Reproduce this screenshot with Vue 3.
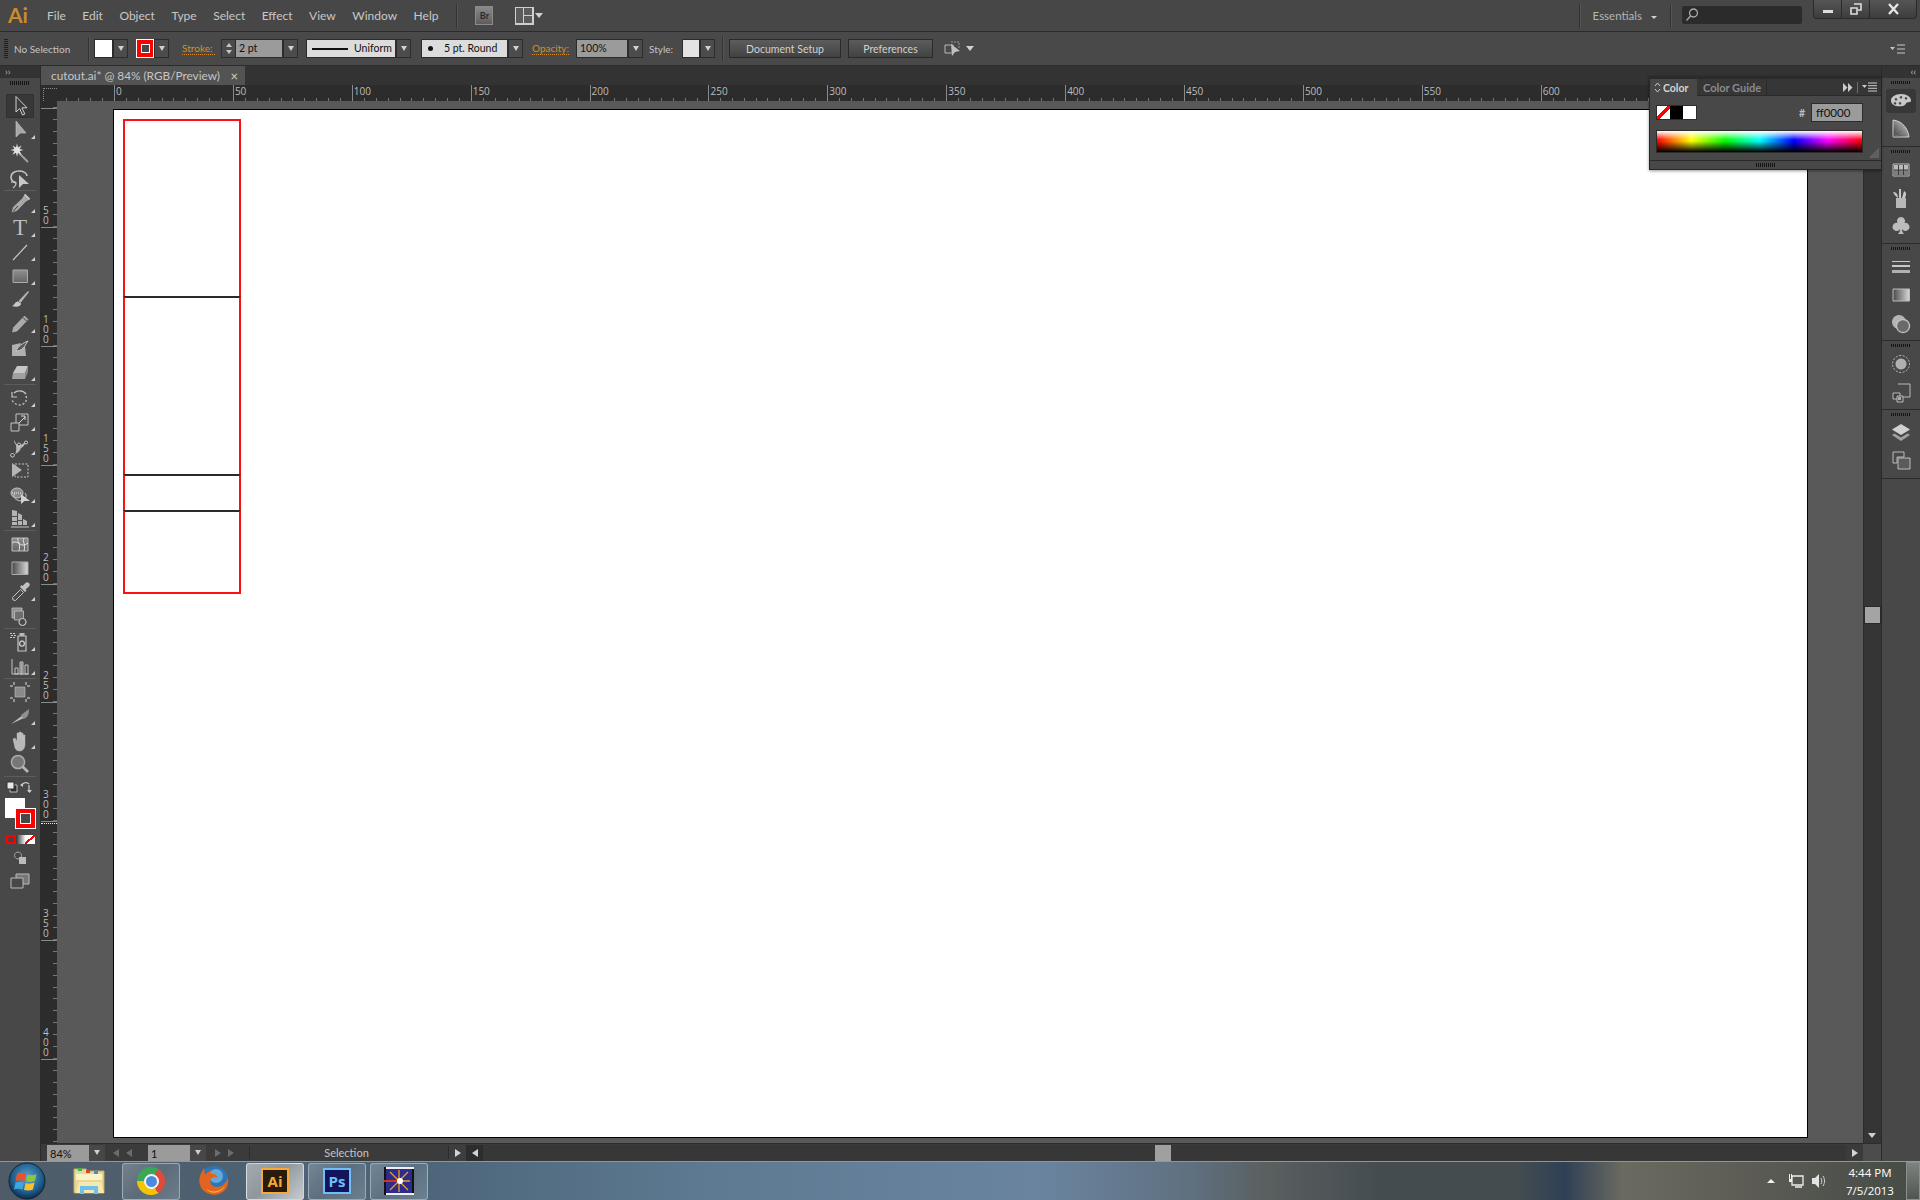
<script setup>
const menus = ['File', 'Edit', 'Object', 'Type', 'Select', 'Effect', 'View', 'Window', 'Help']

const L = '#b4b4b4'
const S = '#c4c4c4'
const D = '#3c3c3c'

// each path: [d, fill, stroke, strokeWidth, dash]
const toolGroups = [
  [
    { id: 'selection', active: true, paths: [['M8 2.500V18l3.600-3.400 3 6.400 2.200-1-2.900-6.200H19Z', D, '#d0d0d0', 1]] },
    { id: 'direct', more: true, paths: [['M8 3v16l4.200-4H18Z', '#a8a8a8', '#c8c8c8', 0.6]] },
    { id: 'wand', paths: [['M11 11l9 9', 'none', '#a0a0a0', 2], ['M9 1.500l1 4 3.600-2-2 3.600 4 1-4 1 2 3.600-3.600-2-1 4-1-4-3.600 2 2-3.600-4-1 4-1-2-3.600 3.600 2Z', '#e2e2e2']] },
    { id: 'lasso', paths: [['M8 17c-4-1-5-3-5-6 0-4 4-6 8-6s8 2 8 5', 'none', S, 1.6], ['M3.500 17c0-2 4-2 4.500 0s-2 4-3 5', 'none', S, 1.2], ['M11 9v13l4-4h6Z', '#c8c8c8']] }
  ],
  [
    { id: 'pen', more: true, paths: [['M16 4l4 4-2.500 1.500L9 18.500 4 20l1.500-5L14.500 6.500Z', '#a8a8a8', '#c4c4c4', 0.5], ['M5 19.500l5-5.500', 'none', D, 1], ['M16.500 2.500l5 5', 'none', '#c8c8c8', 2]] },
    { id: 'type', more: true, glyph: 'T' },
    { id: 'line', more: true, paths: [['M5 20L19 5', 'none', S, 1.2]] },
    { id: 'rect', more: true, paths: [['M5 6h14.500v12.500H5Z', 'url(#iconGrad)', '#aaa', 1]] },
    { id: 'brush', paths: [['M20 3L10.500 13l2 2L21 4Z', '#b4b4b4'], ['M10 13.500c-3 0-3 3-6 4.500 3 1.500 9 1 9-2.500Z', '#c8c8c8']] },
    { id: 'pencil', more: true, paths: [['M16.500 4l3.500 3.500L9 19l-4.500 1 1-4.500Z', '#aaa', '#c4c4c4', 0.5], ['M15 5.500l3.500 3.500', 'none', D, 1]] },
    { id: 'blob', paths: [['M4 9l9-2-2 5 6-2 1 10H4Z', '#b0b0b0'], ['M8 15c2-5 7-8 12-10l-2 3c-2 4-5 7-10 7Z', '#5a5a5a', '#c8c8c8', 1]] },
    { id: 'eraser', more: true, paths: [['M9 6h11l-3 7H5Z', '#c6c6c6'], ['M5 13h12v6H4Z', '#a0a0a0'], ['M17 13l3-7v6l-3 7Z', '#8a8a8a']] }
  ],
  [
    { id: 'rotate', more: true, paths: [['M6 7c3-3 9-3 12 1', 'none', S, 1.3], ['M4 6v5h5', 'none', S, 1.2], ['M18 10c2 5-2 9-6 9s-8-3-8-6', 'none', S, 1.3, '2 2']] },
    { id: 'scale', more: true, paths: [['M8 4h12v11H8Z', 'none', S, 1], ['M3 13h8v8H3Z', '#484848', S, 1], ['M11 13l6-6M13 6h4v4', 'none', '#ddd', 1]] },
    { id: 'warp', more: true, paths: [['M6 6c2 3 2 5 6 5 3 0 3-3 7-3-3 2-3 5-6 6-1 3-3 5-6 6 2-3 1-7 1-9-1-1-2-3-2-5Z', '#b8b8b8'], ['M4.500 19.500a1.800 1.800 0 1 0 .01 0M11 9a1.500 1.500 0 1 0 .01 0M18 7a1.500 1.500 0 1 0 .01 0', D, '#e2e2e2', 1]] },
    { id: 'free', paths: [['M7 6h13v13H7Z', 'none', S, 1, '2 1.500'], ['M4 5l10 7-10 7Z', '#b4b4b4']] },
    { id: 'shape', more: true, paths: [['M3 11a6 5 0 1 0 12 0a6 5 0 1 0-12 0', '#8a8a8a', S, 1], ['M7 11a6 5 0 1 0 10 0', 'none', S, 1], ['M4 11h10', 'none', '#eee', 1, '1 1'], ['M13 12v10l3.500-3H22Z', '#d0d0d0']] },
    { id: 'persp', more: true, paths: [['M4 4l5 1v5H4ZM4 11h5v4H4ZM4 16h5v3H4ZM10 7l4 2v5h-4ZM10 15h4v4h-4ZM15 13l4 2v4h-4Z', '#b4b4b4'], ['M3 21h18', 'none', S, 1]] }
  ],
  [
    { id: 'mesh', paths: [['M4 6h16v13H4Z', 'url(#iconGrad)', '#bbb', 1], ['M4 11c3-2 5-1 8 1s5 1 8-1M10 6c-1 4 3 5 1 13M16 6c-2 4 2 6 0 13', 'none', '#e4e4e4', 1]] },
    { id: 'gradient', paths: [['M4 6h16v12.500H4Z', 'url(#iconGradH)', '#aaa', 1]] },
    { id: 'dropper', more: true, paths: [['M5 20l-.5-2.500 8-8 3 3-8 8Z', '#4a4a4a', S, 1], ['M12 7l5 5 1.500-1.500-1-1L21 6.500a2.200 2.200 0 0 0-3.500-3.500L14.500 6l-1-1Z', '#c0c0c0']] },
    { id: 'blend', paths: [['M4 4h10v10H4Z', '#8c8c8c', S, 0.8], ['M6.500 7h9v9h-9Z', '#6e6e6e', S, 0.8], ['M14.500 14.500a3.500 3.500 0 1 0 .01 0', '#484848', S, 1.2]] }
  ],
  [
    { id: 'symbol', more: true, paths: [['M10 6h8v15h-8Z', '#4a4a4a', S, 1.2], ['M11.500 3h5v3h-5Z', '#b8b8b8'], ['M14 11a2.500 2.500 0 1 0 .01 0', 'none', S, 1.5], ['M2 3h2v1H2ZM5 3h2v1H5ZM3 5h2v1H3ZM6 5h2v1H6ZM2 7h2v1H2ZM5 7h2v1H5Z', '#c8c8c8']] },
    { id: 'graph', more: true, paths: [['M4 5v15h17', 'none', S, 1], ['M7 14h3v6H7ZM12 8h3v12h-3ZM17 11h3v9h-3Z', 'none', S, 1], ['M12.500 8.500h2V20h-2Z', '#aaa']] }
  ],
  [
    { id: 'artboard', paths: [['M7 7h10v10H7Z', '#8a8a8a', S, 0.6], ['M2 6h3M19 6h3M2 18h3M19 18h3M6 2v3M18 2v3M6 19v3M18 19v3', 'none', '#ddd', 1]] },
    { id: 'slice', more: true, paths: [['M3 20l12-9 1 3Z', '#bbb'], ['M13 11l8-6c0 5-1 9-6 10Z', '#909090']] },
    { id: 'hand', more: true, paths: [['M5 11l2-1 2 3V5h2v6-7h2v7-6h2v7-5h2v9c0 4-2 7-5 7s-4-1-5-3Z', '#b8b8b8', '#c8c8c8', 0.4]] },
    { id: 'zoom', paths: [['M10 3.500a6.500 6.500 0 1 0 .01 0', '#777', '#aaa', 1.5], ['M14.500 14.500L20 20', 'none', '#b4b4b4', 2.6]] }
  ]
]

const dockGroups = [
  [
    { id: 'color', active: true, paths: [['M12 5c6 0 10 3 10 6.500 0 2-2.500 1.500-4 2s-1 3-4.500 3.500C7 18 2 16 2 11.500 2 8 6 5 12 5Z', '#c8c8c8'], ['M7 9a1.300 1.300 0 1 0 .01 0M12 7a1.300 1.300 0 1 0 .01 0M17 8a1.300 1.300 0 1 0 .01 0M6 13a1.300 1.300 0 1 0 .01 0M11 13a1.300 1.300 0 1 0 .01 0', '#484848']] },
    { id: 'guide', paths: [['M4 3c9 1 15 8 16 17H4Z', 'url(#iconGradR)', '#ccc', 1], ['M4 20L13 8M4 20l12-5', 'none', '#888', 0.6]] }
  ],
  [
    { id: 'swatches', paths: [['M4 6h16v12H4Z', D, '#bbb', 1], ['M5 7h4v4.500H5ZM10 7h4v4.500h-4ZM15 7h4v4.500h-4Z', '#bbb'], ['M5 12.500h4V17H5ZM10 12.500h4V17h-4ZM15 12.500h4V17h-4Z', '#7e7e7e']] },
    { id: 'brushes', paths: [['M7 12h10v10H7Z', '#b8b8b8'], ['M10 12V3h2v9ZM13 12l2-7c2 1 3 3 1 7ZM9 12C6 10 5 8 4 6c3 0 5 2 5 6Z', '#c8c8c8']] },
    { id: 'symbols', paths: [['M12 3a4 4 0 0 1 3.500 6 4 4 0 1 1-2.500 6c0 2 .5 3.500 2 5H9c1.500-1.500 2-3 2-5a4 4 0 1 1-2.500-6A4 4 0 0 1 12 3Z', '#bcbcbc']] }
  ],
  [
    { id: 'stroke', paths: [['M3 6h18v1H3Z', '#c8c8c8'], ['M3 10h18v2H3Z', '#c8c8c8'], ['M3 15h18v3H3Z', '#b0b0b0']] },
    { id: 'gradient', paths: [['M4 6h16.500v12H4Z', 'url(#iconGradH)', '#bbb', 1]] },
    { id: 'transparency', paths: [['M10 4a7 7 0 1 0 .01 0', '#b4b4b4'], ['M14 8.500a6.500 6.500 0 1 0 .01 0', '#6a6a6a', '#c0c0c0', 1.3]] }
  ],
  [
    { id: 'appearance', paths: [['M12 3.500a8.500 8.500 0 1 0 .01 0', 'none', '#bbb', 1, '2 1.500'], ['M12 6.500a5.500 5.500 0 1 0 .01 0', '#b0b0b0']] },
    { id: 'styles', paths: [['M9 4h12v13H12', 'none', '#bbb', 1], ['M4 13h7v6H4Z', D, '#bbb', 1], ['M8 16h6v6H8Z', '#484848', '#bbb', 1], ['M9 17h3v3H9Z', '#aaa']] }
  ],
  [
    { id: 'layers', paths: [['M12 3l9 5.500L12 14 3 8.500Z', '#d0d0d0'], ['M5.500 12.500L12 16.500l6.500-4L21 14l-9 6-9-6Z', '#a0a0a0']] },
    { id: 'artboards', paths: [['M4 3h11v5H8v6H4Z', 'none', '#bbb', 1], ['M9 9h12v11H9Z', '#5a5a5a', '#bbb', 1]] }
  ]
]

const hLabels = Array.from({ length: 15 }, (_, i) => i * 50)
const vLabels = Array.from({ length: 8 }, (_, i) => String((i + 1) * 50))
const taskApps = ['folder', 'chrome', 'firefox', 'ai', 'ps', 'flash']
</script>

<template>
  <div class="app">
    <svg class="defs" aria-hidden="true">
      <defs>
        <linearGradient id="iconGrad" x1="0" y1="0" x2="0" y2="1">
          <stop offset="0" stop-color="#8e8e8e" /><stop offset="1" stop-color="#666" />
        </linearGradient>
        <linearGradient id="iconGradH" x1="0" y1="0" x2="1" y2="0">
          <stop offset="0" stop-color="#4a4a4a" /><stop offset="1" stop-color="#d8d8d8" />
        </linearGradient>
        <linearGradient id="iconGradR" x1="0" y1="1" x2="1" y2="0">
          <stop offset="0" stop-color="#333" /><stop offset="1" stop-color="#ddd" />
        </linearGradient>
      </defs>
    </svg>

    <header class="menu-bar">
      <span class="logo">Ai</span>
      <nav class="menus">
        <span v-for="m in menus" :key="m">{{ m }}</span>
      </nav>
      <i class="sep sep-menu"></i>
      <span class="bridge">Br</span>
      <span class="arrange"><i></i><i></i><i></i></span>
      <i class="tri arrange-tri"></i>
      <div class="menu-right">
        <i class="sep"></i>
        <span class="essentials">Essentials</span>
        <i class="tri small"></i>
        <i class="sep sep-search"></i>
        <div class="search">
          <svg width="14" height="14" viewBox="0 0 14 14"><path d="M8.500 1a4 4 0 1 0 .01 0M5.500 8L1.500 12.500" fill="none" stroke="#aaa" stroke-width="1.3" /></svg>
        </div>
        <div class="win-btns">
          <span class="win-btn"><svg width="12" height="12" viewBox="0 0 12 12"><path d="M1 7h10v3H1Z" fill="#ddd" /></svg></span>
          <span class="win-btn"><svg width="14" height="12" viewBox="0 0 14 12"><path d="M5 1h7v6H9M2 5h6v6H2Z" fill="none" stroke="#ddd" stroke-width="1.6" /></svg></span>
          <span class="win-btn win-close"><svg width="13" height="12" viewBox="0 0 13 12"><path d="M2 1l9 10M11 1L2 11" stroke="#e4e4e4" stroke-width="2.4" /></svg></span>
        </div>
      </div>
    </header>

    <div class="control-bar">
      <i class="grip-v"></i>
      <span class="no-sel">No Selection</span>
      <i class="sep"></i>
      <span class="swatch-white m4"></span><i class="dd"></i>
      <span class="swatch-stroke m8"><i></i></span><i class="dd"></i>
      <span class="link stroke-label">Stroke:</span>
      <span class="spin"><i class="up"></i><i class="down"></i></span>
      <span class="field w48">2 pt</span><i class="dd"></i>
      <span class="field light w90 m8"><i class="stroke-line"></i>Uniform</span><i class="dd"></i>
      <span class="field light w87 m10"><i class="dot"></i>5 pt. Round</span><i class="dd"></i>
      <span class="link opacity-label">Opacity:</span>
      <span class="field w52">100%</span><i class="dd"></i>
      <span class="style-label">Style:</span>
      <span class="swatch-style"></span><i class="dd"></i>
      <i class="sep m7"></i>
      <button class="btn btn-doc">Document Setup</button>
      <button class="btn btn-pref">Preferences</button>
      <svg class="align-icon" width="17" height="17" viewBox="0 0 17 17">
        <path d="M1 5h8v8H1Z" fill="none" stroke="#b8b8b8" />
        <path d="M7 2h8v7" fill="none" stroke="#999" stroke-dasharray="2 1" />
        <path d="M7 4l1 12 3-4 5-1Z" fill="#c0c0c0" />
      </svg>
      <i class="tri align-tri"></i>
      <svg class="panel-menu" width="15" height="10" viewBox="0 0 15 10">
        <path d="M0 3h5L2.500 6Z" fill="#c8c8c8" /><path d="M7 1h8M7 5h8M7 9h8" stroke="#c8c8c8" />
      </svg>
    </div>

    <div class="workspace">
      <aside class="toolbox">
        <div class="collapse-row"><span>››</span></div>
        <div class="grip-row"><i class="grip-h"></i></div>
        <template v-for="(group, gi) in toolGroups" :key="gi">
          <div
            v-for="tool in group"
            :key="tool.id"
            class="tool"
            :class="{ active: tool.active, more: tool.more }"
          >
            <svg width="24" height="24" viewBox="0 0 24 24">
              <text v-if="tool.glyph" x="12" y="19" text-anchor="middle" class="glyph">{{ tool.glyph }}</text>
              <path
                v-for="(p, pi) in tool.paths || []"
                :key="pi"
                :d="p[0]"
                :fill="p[1] || L"
                :stroke="p[2] || 'none'"
                :stroke-width="p[3] || 0"
                :stroke-dasharray="p[4] || 'none'"
              />
            </svg>
          </div>
          <i class="tool-divider"></i>
        </template>

        <div class="mini-row">
          <svg width="14" height="14" viewBox="0 0 14 14"><path d="M5 5h7v7H5Z" fill="#2e2e2e" stroke="#bbb" /><path d="M2 2h7v7H2Z" fill="#e8e8e8" stroke="#333" /></svg>
          <svg width="14" height="14" viewBox="0 0 14 14"><path d="M3 5c2-3 5-3 7-1M10 5v7" fill="none" stroke="#ccc" stroke-width="1.2" /><path d="M1 5l3-2v4ZM8 10h5l-2.500 3Z" fill="#ccc" /></svg>
        </div>
        <div class="fill-stroke">
          <span class="big-fill"></span>
          <span class="big-stroke"><i></i></span>
        </div>
        <div class="mode-row">
          <span class="mode mode-color"></span><span class="mode mode-grad"></span><span class="mode mode-none"></span>
        </div>
        <div class="small-icon draw-mode">
          <svg width="14" height="14" viewBox="0 0 14 14"><path d="M5 1a3.500 3.500 0 1 0 .01 0" fill="#444" stroke="#aaa" /><path d="M6 6h7v7H6Z" fill="#bbb" /></svg>
        </div>
        <div class="small-icon screen-mode">
          <svg width="20" height="16" viewBox="0 0 20 16"><path d="M6 1h13v10H6Z" fill="#777" stroke="#bbb" /><path d="M1 5h12v10H1Z" fill="#484848" stroke="#bbb" /></svg>
        </div>
      </aside>

      <main class="doc">
        <div class="tabs">
          <div class="tab">
            <span>cutout.ai* @ 84% (RGB/Preview)</span>
            <b class="tab-close">×</b>
          </div>
        </div>

        <div class="hruler">
          <div class="corner"><i></i></div>
          <div class="hcell hcell-lead"></div>
          <div v-for="n in hLabels" :key="n" class="hcell">{{ n }}</div>
        </div>

        <div class="doc-body">
          <div class="vruler">
            <div class="vcell vcell-lead"></div>
            <div v-for="n in vLabels" :key="n" class="vcell">
              <span v-for="(d, i) in n" :key="i">{{ d }}</span>
            </div>
            <div class="vcell"></div>
            <i class="mouse-mark"></i>
          </div>
          <div class="canvas">
            <div class="artboard">
              <div class="cutout">
                <div class="cut h1"></div>
                <div class="cut h2"></div>
                <div class="cut h3"></div>
                <div class="cut h4"></div>
              </div>
            </div>
          </div>
          <div class="vscroll">
            <span class="vthumb"></span>
            <i class="tri vdown"></i>
          </div>
        </div>

        <div class="statusbar">
          <span class="sfield zoom-field">84%</span><i class="dd sdd"></i>
          <span class="snav"><i class="nav-l first"></i><i class="nav-l"></i></span>
          <span class="sfield page-field">1</span><i class="dd sdd"></i>
          <span class="snav snav2"><i class="nav-r"></i><i class="nav-r last"></i></span>
          <span class="sel-label">Selection</span>
          <span class="arrow-box"><i class="nav-r bright"></i></span>
          <span class="arrow-box"><i class="nav-l bright"></i></span>
          <div class="htrack"><span class="hthumb"></span></div>
          <span class="arrow-box narrow"><i class="nav-r bright"></i></span>
          <span class="scorner"></span>
        </div>

        <section class="color-panel">
          <div class="panel-head">
            <div class="ptab ptab-on">
              <svg width="7" height="11" viewBox="0 0 7 11"><path d="M1 4l2.500-3L6 4M1 7l2.500 3L6 7" fill="none" stroke="#ccc" /></svg>
              <span>Color</span>
            </div>
            <div class="ptab ptab-off">Color Guide</div>
            <div class="phead-right">
              <svg width="10" height="9" viewBox="0 0 10 9"><path d="M0 0l4.500 4.500L0 9ZM5 0l4.500 4.500L5 9Z" fill="#ccc" /></svg>
              <i class="phead-sep"></i>
              <svg width="15" height="10" viewBox="0 0 15 10"><path d="M0 3h5L2.500 6Z" fill="#ccc" /><path d="M6 1h9M6 3.700h9M6 6.300h9M6 9h9" stroke="#ccc" /></svg>
            </div>
          </div>
          <div class="panel-body">
            <div class="panel-row">
              <div class="swatches"><i class="sw-none"></i><i class="sw-black"></i><i class="sw-white"></i></div>
              <span class="hash">#</span>
              <span class="hex">ff0000</span>
            </div>
            <div class="spectrum"></div>
            <i class="resize-dots"></i>
          </div>
          <div class="panel-foot"><i class="grip-h"></i></div>
        </section>
      </main>

      <aside class="dock">
        <div class="collapse-row dock-collapse"><span>‹‹</span></div>
        <div v-for="(group, gi) in dockGroups" :key="gi" class="dock-group">
          <i class="grip-h dock-grip"></i>
          <div v-for="item in group" :key="item.id" class="dock-item" :class="{ active: item.active }">
            <svg width="24" height="24" viewBox="0 0 24 24">
              <path
                v-for="(p, pi) in item.paths"
                :key="pi"
                :d="p[0]"
                :fill="p[1]"
                :stroke="p[2] || 'none'"
                :stroke-width="p[3] || 0"
                :stroke-dasharray="p[4] || 'none'"
              />
            </svg>
          </div>
        </div>
      </aside>
    </div>

    <footer class="taskbar">
      <div class="orb">
        <svg width="38" height="38" viewBox="0 0 38 38">
          <defs>
            <radialGradient id="orbBg" cx="50%" cy="40%" r="60%">
              <stop offset="0" stop-color="#5fa3d0" /><stop offset=".7" stop-color="#1d5c8c" /><stop offset="1" stop-color="#0c2c4c" />
            </radialGradient>
          </defs>
          <circle cx="19" cy="19" r="18" fill="url(#orbBg)" stroke="#16242f" />
          <path d="M9 12c3-2 6-1 9 0l-1.500 7c-3-1-6-1-9 0Z" fill="#e8532c" />
          <path d="M19.500 12.500c3 1 6 1 9-.5l-1.500 7c-3 1.500-6 1-9 .5Z" fill="#8cc63f" />
          <path d="M7.500 20.500c3-1 6-1 8.500 0l-1.500 7c-3-1-6-1-8.500 0Z" fill="#3fa4e0" />
          <path d="M17.500 21c3 .8 6 1 9-.5l-1.500 7c-3 1.500-6 1-9 .5Z" fill="#f7c12e" />
        </svg>
      </div>
      <div v-for="app in taskApps" :key="app" class="task-item" :class="'task-' + app">
        <svg v-if="app === 'folder'" width="34" height="32" viewBox="0 0 34 32">
          <path d="M2 4h12l2 2h16v22H2Z" fill="#e8d898" stroke="#c4a860" />
          <path d="M4 9h26v6H4Z" fill="#fbf3c8" />
          <path d="M6 3h4v3H6Z" fill="#3eb54a" /><path d="M14 5h4v3h-4Z" fill="#d9482c" /><path d="M22 6h4v3h-4Z" fill="#3a8edc" />
          <path d="M4 28l3-11h22l3 11Z" fill="#f5e9ae" />
          <path d="M8 21h18v8h-4v-4H12v4H8Z" fill="#6fc0ec" />
        </svg>
        <span v-else-if="app === 'chrome'" class="chrome"><i></i></span>
        <svg v-else-if="app === 'firefox'" width="34" height="34" viewBox="0 0 34 34">
          <circle cx="18" cy="16" r="14" fill="#2f75b5" />
          <circle cx="20" cy="12" r="7" fill="#62a8dc" />
          <path d="M8 4c-3 5-6 10-4 17 3 9 14 12 21 8 6-3 8-9 7-15-2 5-6 9-11 9-6 0-8-5-6-8 2-2 5-2 7-1-1-3-4-5-7-4 0-2 0-3 1-4-3 1-6 3-7 5Z" fill="#e2641e" />
          <path d="M10 25c6 4 14 3 19-3-3 6-13 10-19 3Z" fill="#f7b733" />
        </svg>
        <span v-else-if="app === 'ai'" class="app-tile tile-ai">Ai</span>
        <span v-else-if="app === 'ps'" class="app-tile tile-ps">Ps</span>
        <svg v-else width="30" height="28" viewBox="0 0 30 28">
          <path d="M0 0h30v28H0Z" fill="#eee" />
          <path d="M2 2h26v24H2Z" fill="#2c2c8c" />
          <path d="M2 0h-2v28h2ZM28 2h2v24h-2Z" fill="#111" />
          <path d="M0 14h15" stroke="#d83020" stroke-width="2" />
          <path d="M15 14L15 3M15 14L15 25M15 14L26 14M15 14L24 5M15 14L24 23M15 14L6 5M15 14L6 23" stroke="#f0a020" stroke-width="1.3" />
          <circle cx="16" cy="14" r="3" fill="#fff" />
        </svg>
      </div>

      <div class="tray">
        <i class="tray-up"></i>
        <svg width="16" height="16" viewBox="0 0 16 16">
          <path d="M4 3h11v9H4Z" fill="none" stroke="#eee" stroke-width="1.3" />
          <path d="M1 1h1v6H1ZM3 1h1v6H3ZM1 6h3v3H1Z" fill="#eee" /><path d="M7 14h7" stroke="#eee" stroke-width="1.5" />
        </svg>
        <svg width="16" height="16" viewBox="0 0 16 16">
          <path d="M1 5h3l4-4v14l-4-4H1Z" fill="#e4e4e4" />
          <path d="M10 5c1 2 1 4 0 6M12 3c2 3 2 7 0 10" fill="none" stroke="#d4d4d4" />
        </svg>
        <div class="clock"><span>4:44 PM</span><span>7/5/2013</span></div>
        <i class="show-desktop"></i>
      </div>
    </footer>
  </div>
</template>

<style>
html, body { margin: 0; background: #484848; overflow: hidden; }
</style>

<style scoped>
.app {
  position: relative;
  width: 1920px;
  height: 1200px;
  display: flex;
  flex-direction: column;
  overflow: hidden;
  background: #484848;
  color: #c8c8c8;
  font-family: Lato, "Open Sans", sans-serif;
  font-size: 11px;
}
.app i { display: block; flex: none; }
.defs { position: absolute; width: 0; height: 0; }

/* menu bar */
.menu-bar {
  height: 31px;
  flex: none;
  display: flex;
  align-items: center;
  border-bottom: 1px solid #2c2c2c;
  background: #474747;
  padding-left: 8px;
}
.logo {
  width: 22px;
  font-size: 21px;
  font-weight: 700;
  color: #c98b2d;
  margin-top: -3px;
}
.menus { display: flex; gap: 16.5px; margin-left: 17px; font-size: 12px; color: #c8c8c8; }
.sep { width: 2px; height: 24px; box-sizing: border-box; background: #333; border-right: 1px solid #555; flex: none; }
.sep-menu { margin-left: 18px; }
.bridge {
  margin-left: 17px;
  width: 16px;
  height: 17px;
  border: 1px solid #8a8a8a;
  background: linear-gradient(#8a8a8a, #5d5d5d);
  color: #2c2c2c;
  font-size: 9px;
  font-weight: 700;
  text-align: center;
  line-height: 17px;
}
.arrange {
  margin-left: 22px;
  width: 17px;
  height: 16px;
  border: 1px solid #cfcfcf;
  display: grid;
  grid-template-columns: 7px 8px;
  grid-template-rows: 7px 7px;
  gap: 1px;
  background: #cfcfcf;
}
.arrange i { background: #5b5b5b; }
.arrange i:first-child { grid-row: span 2; }
.tri {
  width: 0;
  height: 0;
  border-left: 4px solid transparent;
  border-right: 4px solid transparent;
  border-top: 5px solid #d0d0d0;
}
.tri.small { border-left-width: 3px; border-right-width: 3px; border-top-width: 3px; margin-left: 9px; margin-top: 3px; }
.arrange-tri { margin-left: 1px; }
.menu-right { margin-left: auto; display: flex; align-items: center; height: 100%; }
.essentials { margin-left: 12px; font-size: 11.5px; color: #b4b4b4; }
.sep-search { margin-left: 13px; }
.search {
  margin-left: 10px;
  width: 120px;
  height: 18px;
  margin-top: -1px;
  background: #2b2b2b;
  border-radius: 2px;
  display: flex;
  align-items: center;
  padding-left: 3px;
  box-sizing: border-box;
}
.win-btns {
  align-self: flex-start;
  display: flex;
  height: 18px;
  margin: 0 3px 0 11px;
  border: 1px solid #2a2a2a;
  border-top: 0;
  border-radius: 0 0 4px 4px;
  background: linear-gradient(#555, #3d3d3d);
}
.win-btn { width: 27px; display: flex; align-items: center; justify-content: center; border-right: 1px solid #2a2a2a; }
.win-close { width: 46px; border-right: 0; }

/* control bar */
.control-bar {
  height: 33px;
  flex: none;
  display: flex;
  align-items: center;
  background: #494949;
  border-bottom: 1px solid #2c2c2c;
  font-size: 10px;
}
.grip-v {
  width: 4px;
  height: 19px;
  margin-left: 4px;
  background: repeating-linear-gradient(#1f1f1f 0 1px, transparent 1px 2px);
}
.no-sel { width: 74px; margin-left: 6px; color: #c4c4c4; box-sizing: border-box; }
.m4 { margin-left: 4px; }
.m7 { margin-left: 7px; }
.m8 { margin-left: 8px; }
.m10 { margin-left: 10px; }
.swatch-white { width: 19px; height: 19px; background: #fff; box-sizing: border-box; border: 1px solid #2a2a2a; }
.swatch-stroke {
  width: 18px;
  height: 19px;
  box-sizing: border-box;
  background: #ff0000;
  border: 1px solid #fff;
  display: flex;
  align-items: center;
  justify-content: center;
}
.swatch-stroke i { width: 7px; height: 7px; background: #484848; border: 1px solid #fff; }
.dd {
  width: 15px;
  height: 19px;
  box-sizing: border-box;
  background: #4c4c4c;
  border: 1px solid #2c2c2c;
  display: flex !important;
  position: relative;
}
.dd::after {
  content: '';
  margin: auto;
  border-left: 3.5px solid transparent;
  border-right: 3.5px solid transparent;
  border-top: 5px solid #cfcfcf;
}
.link {
  color: #d88c2c;
  border-bottom: 1px dotted #d88c2c;
  line-height: 12px;
}
.stroke-label { margin-left: 13px; width: 33px; }
.spin {
  width: 14px;
  height: 19px;
  margin-left: 6px;
  box-sizing: border-box;
  border: 1px solid #2c2c2c;
  border-right: 0;
  background: #4a4a4a;
  display: flex;
  flex-direction: column;
  align-items: center;
  justify-content: center;
  gap: 3px;
}
.spin .up { border-left: 3px solid transparent; border-right: 3px solid transparent; border-bottom: 4px solid #c4c4c4; }
.spin .down { border-left: 3px solid transparent; border-right: 3px solid transparent; border-top: 4px solid #c4c4c4; }
.field {
  height: 19px;
  box-sizing: border-box;
  background: #9b9b9b;
  color: #111;
  border: 1px solid #2c2c2c;
  padding-left: 3px;
  line-height: 17px;
  display: flex;
  align-items: center;
  flex: none;
  font-size: 10.5px;
}
.field.light { background: #dcdcdc; }
.w48 { width: 48px; }
.w52 { width: 52px; }
.w87 { width: 87px; padding-left: 5px; }
.w90 { width: 90px; padding-left: 5px; }
.stroke-line { width: 36px; height: 2px; background: #111; margin-right: 6px; }
.dot { width: 5px; height: 5px; border-radius: 50%; background: #111; margin: 0 11px 0 1px; }
.opacity-label { margin-left: 9px; width: 37px; }
.opacity-label + .field { margin-left: 7px; }
.style-label { margin-left: 6px; width: 26px; color: #c4c4c4; }
.swatch-style { width: 18px; height: 19px; margin-left: 7px; background: #e4e4e4; box-sizing: border-box; border: 1px solid #2c2c2c; }
.btn {
  height: 19px;
  padding: 0;
  box-sizing: border-box;
  border: 1px solid #2a2a2a;
  background: linear-gradient(#5c5c5c, #424242);
  color: #d0d0d0;
  font: inherit;
  font-size: 10.5px;
}
.btn-doc { width: 112px; margin-left: 5px; }
.btn-pref { width: 85px; margin-left: 7px; }
.align-icon { margin-left: 11px; }
.align-tri { margin-left: 5px; }
.panel-menu { margin-left: auto; margin-right: 15px; }

/* workspace */
.workspace { flex: 1; min-height: 0; display: flex; }
.toolbox {
  width: 40px;
  flex: none;
  background: #484848;
  border-right: 1px solid #2b2b2b;
  display: flex;
  flex-direction: column;
}
.collapse-row {
  height: 12px;
  background: #333;
  color: #bbb;
  font-size: 10px;
  line-height: 10px;
  padding-left: 5px;
  flex: none;
}
.grip-row { height: 16px; display: flex; align-items: flex-start; justify-content: center; padding-top: 3px; box-sizing: border-box; flex: none; }
.grip-h {
  width: 20px;
  height: 4px;
  background: repeating-linear-gradient(90deg, #151515 0 1px, transparent 1px 2px);
}
.tool {
  height: 24px;
  flex: none;
  margin: 0 6px;
  position: relative;
  display: flex;
  align-items: center;
  justify-content: center;
}
.tool.active { background: #383838; border-radius: 2px; box-shadow: inset 0 0 0 1px #303030; }
.tool.more::after {
  content: '';
  position: absolute;
  right: -1px;
  bottom: 3px;
  border-left: 4px solid transparent;
  border-bottom: 4px solid #d0d0d0;
}
.glyph { font-family: "Liberation Serif", serif; font-size: 23px; fill: #bdbdbd; }
.tool-divider { height: 1px; margin: 0 4px 1px; background: #5c5c5c; }
.mini-row { height: 16px; margin-top: 1px; display: flex; justify-content: space-between; padding: 0 7px 0 5px; flex: none; align-items: center; }
.fill-stroke { position: relative; height: 36px; margin-top: 1px; flex: none; }
.big-fill { position: absolute; left: 5px; top: 2px; width: 20px; height: 20px; background: #fff; }
.big-stroke {
  position: absolute;
  left: 15px;
  top: 12px;
  width: 21px;
  height: 21px;
  box-sizing: border-box;
  border: 1px solid #fff;
  background: #ff0000;
  display: flex;
  align-items: center;
  justify-content: center;
}
.big-stroke i { width: 9px; height: 9px; background: #484848; border: 1px solid #fff; }
.mode-row { display: flex; margin: 3px 0 0 6px; flex: none; }
.mode { width: 9.5px; height: 9px; }
.mode-color { background: #ff0000; position: relative; }
.mode-color::after { content: ''; position: absolute; inset: 2px; background: #444; }
.mode-grad { background: linear-gradient(90deg, #333, #eee); }
.mode-none { background: linear-gradient(to top left, #fff 42%, #f00 42% 58%, #fff 58%); }
.small-icon { display: flex; justify-content: center; flex: none; }
.draw-mode { margin-top: 7px; }
.screen-mode { margin-top: 8px; }

/* document */
.doc { position: relative; flex: 1; min-width: 0; display: flex; flex-direction: column; }
.tabs { height: 19px; flex: none; background: #333; display: flex; }
.tab {
  width: 204px;
  height: 100%;
  box-sizing: border-box;
  background: #535353;
  color: #c6c6c6;
  font-size: 11.8px;
  padding-left: 10px;
  display: flex;
  align-items: center;
  justify-content: space-between;
  padding-right: 7px;
  white-space: nowrap;
}
.tab-close { color: #cfcfcf; font-size: 13px; font-weight: 400; }
.hruler {
  height: 16px;
  flex: none;
  background: #2c2c2c;
  display: flex;
  overflow: hidden;
  color: #bdbdbd;
  font-family: "Open Sans", sans-serif;
  font-size: 10px;
  line-height: 13px;
}
.corner { width: 16px; flex: none; box-sizing: border-box; position: relative; }
.corner i { position: absolute; left: 2px; top: 3px; right: 0; bottom: 0; border-top: 1px dotted #888; border-left: 1px dotted #888; }
.hcell {
  flex: 0 0 118.9px;
  box-sizing: border-box;
  border-left: 1px solid #8a8a8a;
  padding-left: 1px;
  background: repeating-linear-gradient(90deg, #777 0 1px, transparent 1px 11.89px) -1px bottom / 100% 3px no-repeat;
}
.hcell-lead {
  flex: 0 0 57px;
  border-left: 0;
  background: repeating-linear-gradient(90deg, #777 0 1px, transparent 1px 11.89px) 9px bottom / 100% 3px no-repeat;
}
.doc-body { flex: 1; min-height: 0; display: flex; }
.vruler {
  position: relative;
  width: 16px;
  flex: none;
  background: #2c2c2c;
  overflow: hidden;
  color: #bdbdbd;
  font-family: "Open Sans", sans-serif;
  font-size: 10px;
  line-height: 10px;
}
.vcell {
  height: 118.9px;
  box-sizing: border-box;
  border-bottom: 1px solid #8a8a8a;
  display: flex;
  flex-direction: column;
  justify-content: flex-end;
  padding: 0 0 2px 2px;
  background: repeating-linear-gradient(0deg, #777 0 1px, transparent 1px 11.89px) right bottom / 4px 100% no-repeat;
}
.vcell-lead { height: 8px; }
.mouse-mark { position: absolute; left: 0; right: 0; top: 722px; border-top: 1px dotted #eee; }
.canvas { flex: 1; min-width: 0; background: #595959; padding: 8px 0 0 56px; overflow: hidden; box-sizing: border-box; }
.artboard { width: 1695px; height: 1029px; box-sizing: border-box; border: 1px solid #000; background: #fff; padding: 9px 0 0 9px; }
.cutout { width: 118px; }
.cut { box-sizing: border-box; border: solid #ff1010; border-width: 0 2px; }
.cut + .cut { border-top: 2px solid #2a2a2a; }
.h1 { height: 177px; border-top: 2px solid #ff1010; }
.h2 { height: 178px; }
.h3 { height: 36px; }
.h4 { height: 84px; border-bottom: 2px solid #ff1010; }
.vscroll {
  width: 17px;
  flex: none;
  background: #353535;
  border-left: 1px solid #2c2c2c;
  position: relative;
}
.vthumb { position: absolute; left: 1px; top: 506px; width: 15px; height: 16px; background: #a4a4a4; box-shadow: 0 0 0 1px #2a2a2a; }
.vdown { position: absolute !important; left: 4px; bottom: 5px; }

/* status bar */
.statusbar { height: 18px; flex: none; display: flex; align-items: center; background: #3b3b3b; padding-left: 6px; border-top: 1px solid #2c2c2c; box-sizing: border-box; }
.sfield { width: 42px; height: 16px; background: #9b9b9b; color: #111; line-height: 17px; padding-left: 3px; box-sizing: border-box; flex: none; }
.sdd { height: 16px; width: 16px; background: #474747; border-width: 0; }
.snav { width: 28px; margin: 0 7px 0 8px; display: flex; gap: 7px; flex: none; }
.snav2 { margin: 0 6px 0 9px; }
.nav-l, .nav-r {
  width: 0;
  border-top: 4.5px solid transparent;
  border-bottom: 4.5px solid transparent;
}
.nav-l { border-right: 6px solid #6c6c6c; }
.nav-r { border-left: 6px solid #6c6c6c; }
.nav-l.bright { border-right-color: #d4d4d4; }
.nav-r.bright { border-left-color: #d4d4d4; }
.sel-label { width: 200px; text-align: center; color: #c4c4c4; flex: none; border-left: 1px solid #2c2c2c; border-right: 1px solid #2c2c2c; box-sizing: border-box; padding-right: 5px; }
.arrow-box { width: 17px; height: 16px; display: flex; align-items: center; justify-content: center; flex: none; background: #3e3e3e; }
.arrow-box + .arrow-box { background: #2d2d2d; }
.arrow-box.narrow { background: #3b3b3b; }
.htrack { flex: 1; min-width: 0; height: 16px; background: #373737; display: flex; }
.hthumb { margin-left: 672px; width: 16px; height: 16px; background: #a0a0a0; }
.scorner { width: 18px; height: 17px; flex: none; background: #4c4c4c; }

/* color panel */
.color-panel {
  position: absolute;
  right: 0;
  top: 10px;
  width: 232px;
  background: #484848;
  border: 1px solid #262626;
  border-top: 3px solid #2a2a2a;
  border-right: 0;
  box-sizing: border-box;
  box-shadow: 0 1px 3px rgba(0, 0, 0, .4);
  font-size: 10.5px;
}
.panel-head { height: 17px; display: flex; background: #363636; border-bottom: 1px solid #2a2a2a; box-sizing: border-box; font-weight: 700; }
.ptab { display: flex; align-items: center; gap: 2px; }
.ptab-on { width: 47px; background: #484848; padding-left: 4px; box-sizing: border-box; color: #d4d4d4; height: 17px; }
.ptab-off { width: 70px; padding-left: 6px; box-sizing: border-box; color: #8a8a8a; border-right: 1px solid #2a2a2a; font-size: 11px; }
.phead-right { margin-left: auto; display: flex; align-items: center; gap: 4px; padding-right: 4px; }
.phead-sep { width: 1px; height: 11px; background: #6e6e6e; }
.panel-body { padding: 7px 18px 7px 6px; position: relative; }
.panel-row { display: flex; align-items: center; height: 19px; }
.swatches { display: flex; border: 1px solid #2c2c2c; }
.swatches i { width: 13px; height: 13px; }
.sw-none { background: linear-gradient(to top left, #fff 40%, #f00 40% 60%, #fff 60%); }
.sw-black { background: #000; }
.sw-white { background: #fff; }
.hash { margin-left: auto; color: #bdbdbd; font-weight: 700; }
.hex { width: 52px; height: 19px; margin-left: 6px; background: #9b9b9b; color: #111; box-sizing: border-box; border: 1px solid #2c2c2c; padding-left: 4px; line-height: 17px; font-size: 11.5px; }
.spectrum {
  height: 23px;
  margin-top: 8px;
  box-sizing: border-box;
  border: 1px solid #2c2c2c;
  background:
    linear-gradient(#fff 0, rgba(255, 255, 255, 0) 42%, rgba(0, 0, 0, 0) 48%, #000 100%),
    linear-gradient(90deg, #f00, #ff0, #0f0, #0ff, #00f, #f0f, #f00);
}
.resize-dots {
  position: absolute;
  right: 2px;
  bottom: 2px;
  width: 10px;
  height: 10px;
  background: linear-gradient(to bottom right, transparent 50%, #777 50%);
  opacity: .5;
}
.panel-foot { height: 8px; border-top: 1px solid #2a2a2a; display: flex; align-items: center; justify-content: center; }

/* dock */
.dock { width: 39px; flex: none; background: #484848; border-left: 1px solid #2a2a2a; box-sizing: border-box; }
.dock-collapse { text-align: right; padding-right: 4px; }
.dock-group { padding-bottom: 3px; border-bottom: 1px solid #2b2b2b; }
.dock-grip { margin: 0 auto; height: 9px; background: repeating-linear-gradient(90deg, #151515 0 1px, transparent 1px 2px) center / 100% 3px no-repeat; }
.dock-item { height: 28px; margin: 0 4px; display: flex; align-items: center; justify-content: center; }
.dock-item.active { height: 24px; margin: 2px 4px; background: #383838; border-radius: 3px; }

/* taskbar */
.taskbar {
  height: 39px;
  flex: none;
  box-sizing: border-box;
  border-top: 1px solid #8a98a4;
  display: flex;
  align-items: center;
  background: linear-gradient(90deg, #4f5c68 0, #4d6579 22%, #5d7a92 37%, #6a84a0 54%, #5f7080 62%, #5a5f60 66%, #444c50 72%, #444c50 79%, #2f4055 81.5%, #6b6a60 84.5%, #5c5c55 91%, #454b45 100%);
  color: #fff;
  font-family: "Open Sans", sans-serif;
}
.orb { width: 60px; display: flex; justify-content: center; padding-right: 6px; box-sizing: border-box; flex: none; }
.task-item {
  width: 58px;
  height: 37px;
  margin-right: 4px;
  flex: none;
  box-sizing: border-box;
  display: flex;
  align-items: center;
  justify-content: center;
  border-radius: 3px;
}
.task-chrome, .task-ps, .task-flash {
  border: 1px solid rgba(210, 220, 230, .5);
  background: linear-gradient(135deg, rgba(255, 255, 255, .22), rgba(255, 255, 255, .08) 50%, rgba(255, 255, 255, .18));
}
.task-ai {
  border: 1px solid rgba(235, 235, 235, .7);
  background: linear-gradient(135deg, #a4abb0, #8f979d 45%, #c6cbcf);
}
.chrome {
  width: 28px;
  height: 28px;
  border-radius: 50%;
  background: conic-gradient(from 30deg, #dd4b39 0 120deg, #f6c300 120deg 240deg, #3aa757 240deg 360deg);
  display: flex;
  align-items: center;
  justify-content: center;
}
.chrome i { width: 11px; height: 11px; border-radius: 50%; background: #4a8be0; border: 2.5px solid #f4f4f4; }
.app-tile {
  width: 28px;
  height: 26px;
  box-sizing: border-box;
  font-size: 15px;
  font-weight: 700;
  line-height: 22px;
  text-align: center;
  border: 2px solid;
}
.tile-ai { background: #2a1c0c; color: #f7a83a; border-color: #f7a83a; }
.tile-ps { background: #14145c; color: #6ec0f4; border-color: #6ec0f4; }
.tray { margin-left: auto; display: flex; align-items: center; height: 100%; }
.tray-up {
  border-left: 4px solid transparent;
  border-right: 4px solid transparent;
  border-bottom: 4px solid #f0f0f0;
  margin-right: 13px;
}
.tray > svg { margin-right: 7px; }
.clock {
  width: 69px;
  padding-left: 3px;
  box-sizing: border-box;
  display: flex;
  flex-direction: column;
  align-items: center;
  gap: 3px;
  font-size: 11.5px;
  line-height: 15px;
}
.show-desktop {
  width: 14px;
  height: 100%;
  margin-left: 3px;
  box-sizing: border-box;
  border: 1px solid #8a9090;
  background: linear-gradient(rgba(255, 255, 255, .3), rgba(255, 255, 255, .05));
}
</style>
